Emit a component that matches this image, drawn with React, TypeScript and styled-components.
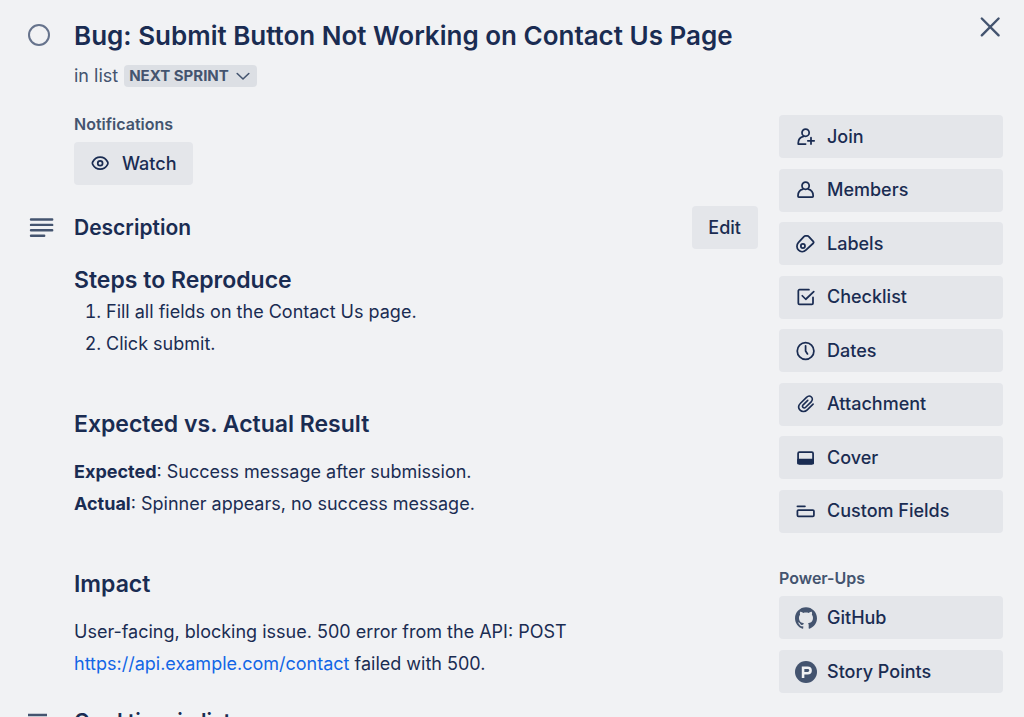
import React from 'react';
import styled, { createGlobalStyle } from 'styled-components';

const GlobalStyle = createGlobalStyle`
  * { box-sizing: border-box; }
  html { overflow: hidden; background: #f1f2f4; }
  body {
    margin: 0;
    background: #f1f2f4;
    color: #1a2c52;
    font: 400 18px/32px Inter, "Liberation Sans", sans-serif;
  }
  h1, h2, h3, p, ol { margin: 0; padding: 0; }
  button { font: inherit; color: inherit; border: 0; cursor: pointer; }
`;

const Card = styled.main`
  padding: 16px 21px 0 27px;
`;

const TopBar = styled.header`
  display: flex;
  align-items: flex-start;
`;

const Gutter = styled.div`
  flex: 0 0 47px;
  display: flex;
  align-items: center;
  color: #44546f;
`;

const CompleteToggle = styled.input`
  appearance: none;
  width: 22px;
  height: 22px;
  margin: 8px 1px;
  border: 2px solid #66738c;
  border-radius: 50%;
  cursor: pointer;
`;

const TitleBlock = styled.div`
  flex: 1;
`;

const Title = styled.h1`
  font-size: 26px;
  line-height: 40px;
  font-weight: 600;
`;

const ListLine = styled.div`
  display: flex;
  align-items: center;
  gap: 6px;
  margin-top: 8px;
  line-height: 24px;
  color: #44546f;
`;

const ListButton = styled.button`
  && {
    display: flex;
    align-items: center;
    gap: 6px;
    height: 22px;
    padding: 0 6px 0 5px;
    border-radius: 4px;
    background: #dcdfe4;
    color: #44546f;
    font-size: 15px;
    font-weight: 700;
    line-height: 22px;
  }
`;

const CloseButton = styled.button`
  display: flex;
  margin-top: -1px;
  padding: 0;
  background: none;
  && { color: #44546f; }
`;

const Columns = styled.div`
  display: flex;
  gap: 21px;
  margin-top: 27px;
`;

const MainColumn = styled.div`
  flex: 1;
  min-width: 0;
`;

const Sidebar = styled.aside`
  flex: 0 0 224px;
`;

const SmallHeading = styled.h3`
  font-size: 16px;
  line-height: 18px;
  font-weight: 600;
  color: #44546f;
`;

const Indented = styled.section`
  padding-left: 47px;
`;

const ActionButton = styled.button<{ $wide?: boolean }>`
  display: flex;
  align-items: center;
  gap: 10px;
  width: ${(p) => (p.$wide ? '100%' : 'auto')};
  height: 43px;
  padding: 0 17px 0 16px;
  border-radius: 4px;
  background: #e4e6ea;
  && { font-weight: 500; }
`;

const WatchButton = styled(ActionButton)`
  margin-top: 9px;
`;

const ActionList = styled.div<{ $minHeight: number }>`
  display: flex;
  flex-direction: column;
  justify-content: space-between;
  min-height: ${(p) => p.$minHeight}px;
`;

const PowerUps = styled.section`
  margin-top: 36px;
  ${ActionList} { margin-top: 9px; }
`;

const SectionHead = styled.div`
  display: flex;
  align-items: center;
  margin-top: 21px;
`;

const SectionTitle = styled.h2`
  flex: 1;
  font-size: 21px;
  line-height: 32px;
  font-weight: 600;
`;

const Heading = styled.h3`
  font-size: 23px;
  line-height: 32px;
  font-weight: 600;
`;

const Steps = styled.ol`
  && { padding-left: 32px; }
  margin-bottom: 48px;
`;

const Paragraph = styled.p`
  && { margin: 16px 0 48px; }
`;

const Description = styled(Indented)`
  padding-top: 15px;
  ${Paragraph}:last-child { margin-bottom: 26px; }
`;

const Link = styled.a`
  color: #1266e6;
  text-decoration: none;
`;

const IconBox = styled.span`
  flex: 0 0 22px;
  display: flex;
  justify-content: center;
`;

const Svg = ({ size = 20, children }: { size?: number; children: React.ReactNode }) => (
  <IconBox>
    <svg width={size} height={size} viewBox="0 0 24 24" fill="none" stroke="currentColor" strokeWidth="2.1" strokeLinecap="round" strokeLinejoin="round" aria-hidden="true">
      {children}
    </svg>
  </IconBox>
);

const EyeIcon = () => (
  <Svg>
    <path d="M11 3.800c-4.600 0-7.700 3.400-9 5.800a3 3 0 0 0 0 2.800c1.300 2.400 4.400 5.800 9 5.800s7.700-3.400 9-5.800a3 3 0 0 0 0-2.800c-1.300-2.400-4.400-5.800-9-5.800z" />
    <circle cx="11" cy="11" r="2.900" />
  </Svg>
);

const TextLinesIcon = () => (
  <svg width="28" height="24" viewBox="0 0 28 24" stroke="currentColor" strokeWidth="2.4" strokeLinecap="round" aria-hidden="true">
    <path d="M4 3.500h21.200M4 8.900h21.200M4 14.300h21.200M4 19.700h13.200" />
  </svg>
);

const ActivityIcon = () => (
  <svg width="28" height="24" viewBox="0 0 28 24" stroke="currentColor" strokeWidth="2.4" aria-hidden="true">
    <path d="M1 5h19M1 12h19M1 19h19" />
  </svg>
);

const ChevronIcon = () => (
  <svg width="16" height="16" viewBox="0 0 16 16" fill="none" stroke="currentColor" strokeWidth="1.6" strokeLinecap="round" strokeLinejoin="round" aria-hidden="true">
    <path d="M2.200 5.500 8 11l5.800-5.500" />
  </svg>
);

const icons: Record<string, React.ReactNode> = {
  Join: (
    <Svg>
      <circle cx="11.500" cy="6.800" r="4.300" />
      <path d="M11.500 20.500H2.700v-1.200c0-4.300 2.600-7.200 6.500-8M18 12.800v7.600M14.200 16.600h7.600" />
    </Svg>
  ),
  Members: (
    <Svg>
      <circle cx="11.500" cy="6.800" r="4.300" />
      <path d="M8.300 11C4.800 12 2.400 14.800 2.400 18.800v.6c0 .7.400 1.100 1.100 1.100h16c.7 0 1.100-.4 1.100-1.100v-.6c0-4-2.400-6.800-5.900-7.800" />
    </Svg>
  ),
  Labels: (
    <Svg>
      <path d="M9.800 2.800 2.800 10.400c-2.300 2.600-2.200 6.600.3 9s6.300 2.200 8.700-.1l8.900-8.200c.7-.6.7-1.300.2-2L15.100 2.800c-.4-.5-.9-.7-1.500-.7h-2.200c-.6 0-1.200.2-1.600.7z" />
      <circle cx="8.300" cy="14.300" r="2.500" />
    </Svg>
  ),
  Checklist: (
    <Svg>
      <path d="M15.500 3.200H4.200c-.8 0-1.400.6-1.400 1.400v14.800c0 .8.600 1.400 1.400 1.400h14.800c.8 0 1.400-.6 1.400-1.400V12.500" />
      <path d="m7.500 10.500 4.200 4.200L21.300 5.500" />
    </Svg>
  ),
  Dates: (
    <Svg>
      <circle cx="11.500" cy="12" r="10" />
      <path d="M11.500 5.800V12l2.300 3.500" />
    </Svg>
  ),
  Attachment: (
    <Svg>
      <path strokeWidth="1.9" d="m20.500 12.200-7 6.800c-2.700 2.600-6.400 2.700-8.600.4s-2.100-5.700.5-8.300l7.200-7.100c1.800-1.800 4.300-1.900 5.900-.4s1.500 4-.3 5.800l-6.600 6.500c-1 1-2.300 1.100-3.200.2s-.7-2.100.2-3.100l5.500-5.400" />
    </Svg>
  ),
  Cover: (
    <Svg>
      <rect x="2.500" y="5" width="18" height="14" rx="1.500" />
      <path fill="currentColor" d="M2.500 14h18v4.500h-18z" />
    </Svg>
  ),
  'Custom Fields': (
    <Svg>
      <path d="M1.700 6.300h9" />
      <rect x="1.700" y="10.800" width="19.800" height="7.600" rx="1.300" />
    </Svg>
  ),
  GitHub: (
    <Svg size={22}>
      <path
        stroke="none"
        fill="#44546f"
        d="M12 .297c-6.630 0-12 5.373-12 12 0 5.303 3.438 9.800 8.205 11.385.600.113.820-.258.820-.577 0-.285-.010-1.040-.015-2.040-3.338.724-4.042-1.610-4.042-1.610C4.422 18.070 3.633 17.700 3.633 17.700c-1.087-.744.084-.729.084-.729 1.205.084 1.838 1.236 1.838 1.236 1.070 1.835 2.809 1.305 3.495.998.108-.776.417-1.305.760-1.605-2.665-.300-5.466-1.332-5.466-5.930 0-1.310.465-2.380 1.235-3.220-.135-.303-.540-1.523.105-3.176 0 0 1.005-.322 3.300 1.230.960-.267 1.980-.399 3-.405 1.020.006 2.040.138 3 .405 2.280-1.552 3.285-1.230 3.285-1.230.645 1.653.240 2.873.120 3.176.765.840 1.230 1.910 1.230 3.220 0 4.610-2.805 5.625-5.475 5.920.420.360.810 1.096.810 2.220 0 1.606-.015 2.896-.015 3.286 0 .315.210.690.825.570C20.565 22.092 24 17.592 24 12.297c0-6.627-5.373-12-12-12"
      />
    </Svg>
  ),
  'Story Points': (
    <Svg size={22}>
      <circle cx="12" cy="12" r="12" fill="#44546f" stroke="none" />
      <path stroke="#f1f2f4" strokeWidth="2.8" strokeLinecap="butt" strokeLinejoin="miter" d="M8.800 18.500V7.400h5c2 0 3.200 1.100 3.200 2.900s-1.200 3-3.200 3H8.800" />
    </Svg>
  ),
};

const cardActions = ['Join', 'Members', 'Labels', 'Checklist', 'Dates', 'Attachment', 'Cover', 'Custom Fields'];
const powerUps = ['GitHub', 'Story Points'];

const Actions = ({ names, minHeight }: { names: string[]; minHeight: number }) => (
  <ActionList $minHeight={minHeight}>
    {names.map((name) => (
      <ActionButton key={name} type="button" $wide>
        {icons[name]}
        {name}
      </ActionButton>
    ))}
  </ActionList>
);

export default function App() {
  return (
    <>
      <GlobalStyle />
      <Card>
        <TopBar>
          <Gutter>
            <CompleteToggle type="checkbox" aria-label="Mark card complete" />
          </Gutter>
          <TitleBlock>
            <Title>Bug: Submit Button Not Working on Contact Us Page</Title>
            <ListLine>
              <span>in list</span>
              <ListButton type="button">
                NEXT SPRINT
                <ChevronIcon />
              </ListButton>
            </ListLine>
          </TitleBlock>
          <CloseButton type="button" aria-label="Close">
            <svg width="26" height="24" viewBox="0 0 26 24" fill="none" stroke="currentColor" strokeWidth="2.4" strokeLinecap="round" aria-hidden="true">
              <path d="m4.800 3.500 16.800 16.800m0-16.800-16.800 16.800" />
            </svg>
          </CloseButton>
        </TopBar>

        <Columns>
          <MainColumn>
            <Indented>
              <SmallHeading>Notifications</SmallHeading>
              <WatchButton type="button">
                <EyeIcon />
                Watch
              </WatchButton>
            </Indented>

            <SectionHead>
              <Gutter>
                <TextLinesIcon />
              </Gutter>
              <SectionTitle>Description</SectionTitle>
              <ActionButton type="button">Edit</ActionButton>
            </SectionHead>

            <Description>
              <Heading>Steps to Reproduce</Heading>
              <Steps>
                <li>Fill all fields on the Contact Us page.</li>
                <li>Click submit.</li>
              </Steps>
              <Heading>Expected vs. Actual Result</Heading>
              <Paragraph>
                <strong>Expected</strong>: Success message after submission.
                <br />
                <strong>Actual</strong>: Spinner appears, no success message.
              </Paragraph>
              <Heading>Impact</Heading>
              <Paragraph>
                User-facing, blocking issue. 500 error from the API: POST
                <br />
                <Link href="https://api.example.com/contact">https://api.example.com/contact</Link> failed with 500.
              </Paragraph>
            </Description>

            <SectionHead>
              <Gutter>
                <ActivityIcon />
              </Gutter>
              <SectionTitle>Card time in list</SectionTitle>
            </SectionHead>
          </MainColumn>

          <Sidebar>
            <Actions names={cardActions} minHeight={418} />
            <PowerUps>
              <SmallHeading>Power-Ups</SmallHeading>
              <Actions names={powerUps} minHeight={97} />
            </PowerUps>
          </Sidebar>
        </Columns>
      </Card>
    </>
  );
}
